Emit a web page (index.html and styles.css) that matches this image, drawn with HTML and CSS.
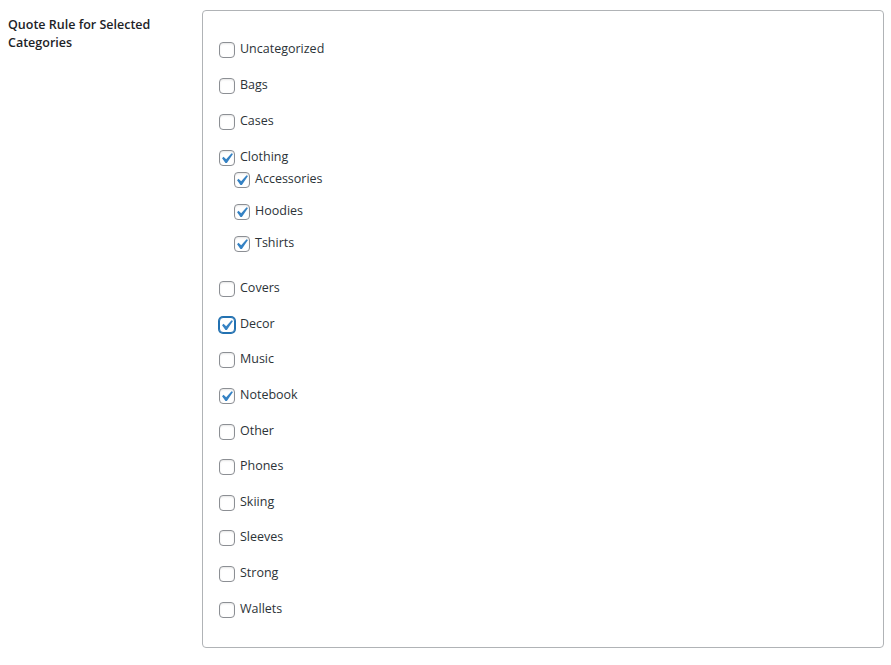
FILE: index.html
```html
<!DOCTYPE html>
<html>
<head>
<meta charset="utf-8">
<link rel="stylesheet" href="styles.css">
</head>
<body>
<div class="row">
  <div class="label">Quote Rule for Selected Categories</div>
  <div class="box">
    <ul class="list">
      <li><label class="item"><span class="cb"></span><span class="txt">Uncategorized</span></label></li>
      <li><label class="item"><span class="cb"></span><span class="txt">Bags</span></label></li>
      <li><label class="item"><span class="cb"></span><span class="txt">Cases</span></label></li>
      <li>
        <label class="item"><span class="cb on"><svg viewBox="0 0 20 20"><path d="M14.83 4.89l1.34.94-5.81 8.38H9.02L5.78 9.67l1.34-1.25 2.57 2.4z"/></svg></span><span class="txt">Clothing</span></label>
        <ul class="children">
          <li><label class="item"><span class="cb on"><svg viewBox="0 0 20 20"><path d="M14.83 4.89l1.34.94-5.81 8.38H9.02L5.78 9.67l1.34-1.25 2.57 2.4z"/></svg></span><span class="txt">Accessories</span></label></li>
          <li><label class="item"><span class="cb on"><svg viewBox="0 0 20 20"><path d="M14.83 4.89l1.34.94-5.81 8.38H9.02L5.78 9.67l1.34-1.25 2.57 2.4z"/></svg></span><span class="txt">Hoodies</span></label></li>
          <li><label class="item"><span class="cb on"><svg viewBox="0 0 20 20"><path d="M14.83 4.89l1.34.94-5.81 8.38H9.02L5.78 9.67l1.34-1.25 2.57 2.4z"/></svg></span><span class="txt">Tshirts</span></label></li>
        </ul>
      </li>
      <li><label class="item"><span class="cb"></span><span class="txt">Covers</span></label></li>
      <li><label class="item"><span class="cb on focus"><svg viewBox="0 0 20 20"><path d="M14.83 4.89l1.34.94-5.81 8.38H9.02L5.78 9.67l1.34-1.25 2.57 2.4z"/></svg></span><span class="txt">Decor</span></label></li>
      <li><label class="item"><span class="cb"></span><span class="txt">Music</span></label></li>
      <li><label class="item"><span class="cb on"><svg viewBox="0 0 20 20"><path d="M14.83 4.89l1.34.94-5.81 8.38H9.02L5.78 9.67l1.34-1.25 2.57 2.4z"/></svg></span><span class="txt">Notebook</span></label></li>
      <li><label class="item"><span class="cb"></span><span class="txt">Other</span></label></li>
      <li><label class="item"><span class="cb"></span><span class="txt">Phones</span></label></li>
      <li><label class="item"><span class="cb"></span><span class="txt">Skiing</span></label></li>
      <li><label class="item"><span class="cb"></span><span class="txt">Sleeves</span></label></li>
      <li><label class="item"><span class="cb"></span><span class="txt">Strong</span></label></li>
      <li><label class="item"><span class="cb"></span><span class="txt">Wallets</span></label></li>
    </ul>
  </div>
</div>
</body>
</html>
```
FILE: styles.css
```css
html, body {
  margin: 0;
  padding: 0;
  background: #ffffff;
}
body {
  font-family: "Open Sans", "Noto Sans", "Liberation Sans", sans-serif;
  font-size: 12.5px;
  color: #2c3338;
}
.row {
  display: flex;
  align-items: flex-start;
  padding: 10px 0 0 8px;
}
.label {
  width: 194px;
  flex: none;
  padding-top: 6px;
  font-weight: 600;
  line-height: 18px;
  color: #1d2327;
  padding-right: 30px;
  box-sizing: border-box;
}
.box {
  width: 682px;
  height: 638px;
  box-sizing: border-box;
  border: 1px solid #b0b3b6;
  border-radius: 4px;
  padding: 27px 16px 0 16px;
}
.list, .children {
  list-style: none;
  margin: 0;
  padding: 0;
}
.list > li {
  margin-bottom: 15.6px;
}
.list > li:nth-child(-n+3) {
  margin-bottom: 15.9px;
}
.children {
  padding-left: 15px;
  padding-bottom: 10px;
}
.children > li {
  margin-top: 12px;
}
.children > li:first-child {
  margin-top: 2px;
}
.item {
  display: flex;
  align-items: flex-start;
  height: 20px;
  line-height: 20px;
}
.cb {
  flex: none;
  width: 16px;
  height: 16px;
  box-sizing: border-box;
  margin-top: 4px;
  margin-right: 5px;
  border: 1px solid #8c8f94;
  border-radius: 4px;
  background: #fff;
  box-shadow: inset 0 1px 2px rgba(0, 0, 0, 0.1);
}
.cb svg {
  display: block;
  width: 21px;
  height: 21px;
  margin: -3px 0 0 -4px;
  fill: #3582c4;
}
.cb.focus {
  border-color: #2271b1;
  box-shadow: 0 0 0 1px #2271b1;
}
.txt {
  white-space: nowrap;
  padding-top: 1px;
}
```
